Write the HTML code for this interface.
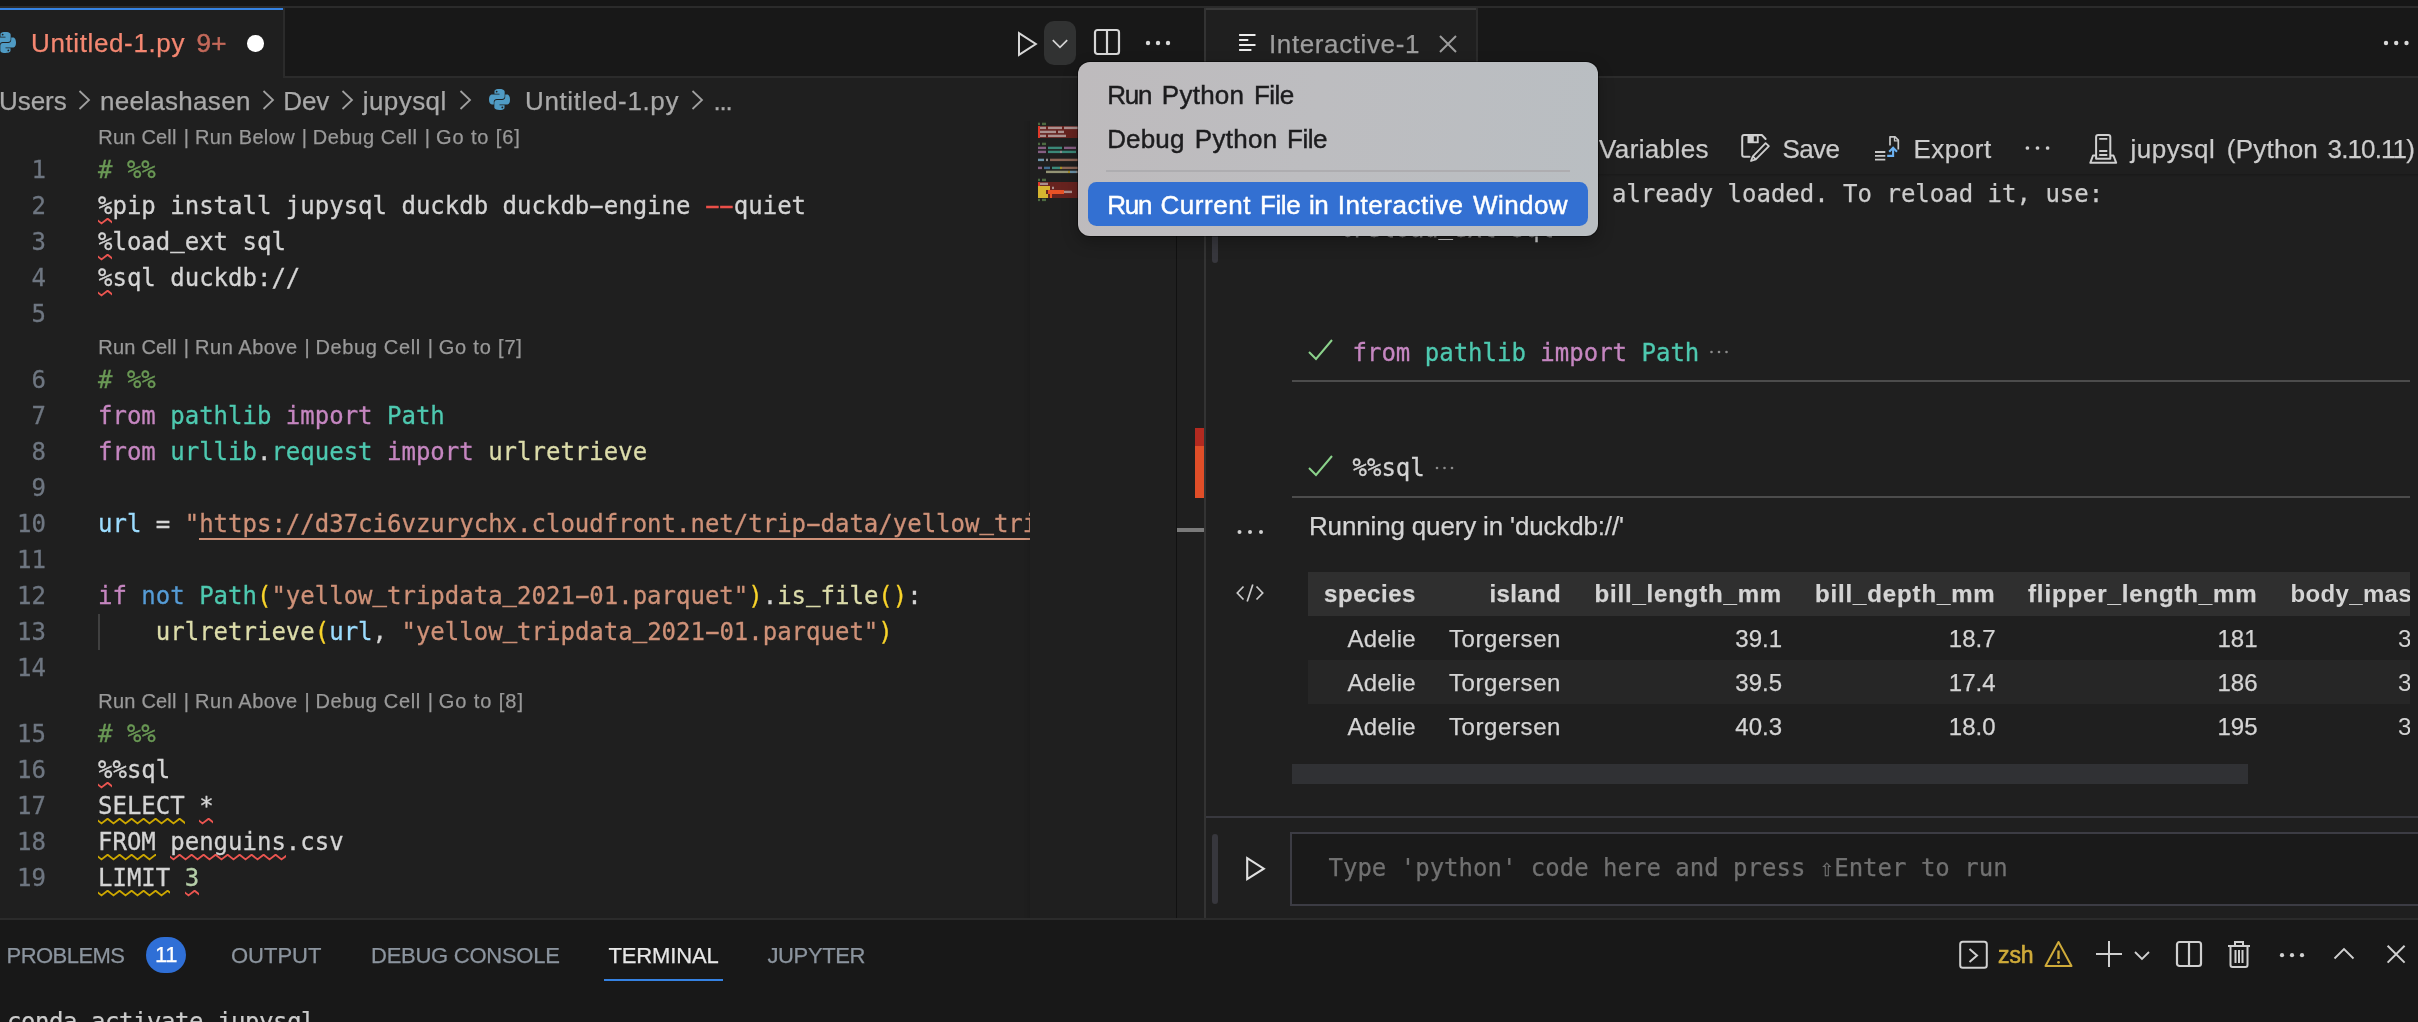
<!DOCTYPE html>
<html lang="en"><head><meta charset="utf-8"><title>Untitled-1.py</title>
<style>
html,body{margin:0;padding:0;background:#1f1f1f;}
body{width:2418px;height:1022px;overflow:hidden;position:relative;}
#root{position:absolute;left:0;top:0;width:2418px;height:1022px;overflow:hidden;will-change:transform;}
.hy{display:inline-block;transform:scaleX(1.950);}
.us{display:inline-block;transform:translateY(-3.500px);}
#root div,#root svg{position:absolute;}
#root span{position:static;}
.g{left:0;top:0;width:0;height:0;}
.t{white-space:pre;-webkit-text-stroke:0.250px;}
.ln{left:0;width:46px;text-align:right;font:400 24px/36px 'DejaVu Sans Mono', 'Liberation Mono', monospace;color:#6e7681;white-space:pre;-webkit-text-stroke:0.300px;}
.cl{left:98px;font:400 24px/36px 'DejaVu Sans Mono', 'Liberation Mono', monospace;white-space:pre;color:#d4d4d4;-webkit-text-stroke:0.300px;}
</style></head>
<body><div id="root">
<div style="left:0px;top:0px;width:2418px;height:6px;background:#161616;"></div>
<div style="left:0px;top:6px;width:2418px;height:2px;background:#2b2b2b;"></div>
<div style="left:0px;top:8px;width:1204px;height:68px;background:#181818;"></div>
<div style="left:1206px;top:8px;width:1212px;height:68px;background:#181818;"></div>
<div style="left:0px;top:76px;width:2418px;height:2px;background:#2b2b2b;"></div>
<div style="left:0px;top:8px;width:283px;height:70px;background:#1f1f1f;"></div>
<div style="left:0px;top:8px;width:283px;height:2px;background:#3582e2;"></div>
<div style="left:283px;top:8px;width:2px;height:69px;background:#2b2b2b;"></div>
<div style="left:1206px;top:8px;width:270px;height:70px;background:#1f1f1f;"></div>
<div style="left:1206px;top:8px;width:270px;height:2px;background:#3a3a3a;"></div>
<div style="left:1476px;top:8px;width:2px;height:69px;background:#2b2b2b;"></div>
<div style="left:1204px;top:8px;width:2px;height:910px;background:#333333;"></div>
<svg style="left:-4.8px;top:31.8px;" width="21" height="21" viewBox="2 2 28 28" fill="none"><path fill="#4f9bc4" d="M15.9 2c-7 0-6.600 3-6.600 3v3.200h6.700v1H6.600S2 8.700 2 15.800c0 7.100 4 6.900 4 6.900h2.400v-3.300s-.100-4 4-4h6.700s3.800.100 3.800-3.700V5.800s.600-3.800-7-3.800zM12.200 4.200a1.200 1.200 0 110 2.400 1.200 1.200 0 010-2.400z"/><path fill="#4f9bc4" d="M16.100 30c7 0 6.600-3 6.600-3v-3.200h-6.700v-1h9.400s4.600.500 4.600-6.600c0-7.100-4-6.900-4-6.900h-2.400v3.300s.100 4-4 4h-6.700s-3.800-.100-3.800 3.700v6.100s-.600 3.600 7 3.600zm3.700-2.200a1.200 1.200 0 110-2.400 1.200 1.200 0 010 2.400z"/></svg>
<div style="left:247px;top:35px;width:16.500px;height:16.500px;border-radius:50%;background:#ffffff"></div>
<svg style="left:1014px;top:28px;" width="30" height="32" viewBox="0 0 30 32" fill="none"><path d="M5 5.200 L21.800 16 L5 26.800 Z" stroke="#d7d7d7" stroke-width="2" stroke-linejoin="miter"/></svg>
<div style="left:1044px;top:21px;width:32px;height:44px;border-radius:10px;background:#313232"></div>
<svg style="left:1050px;top:36px;" width="20" height="16" viewBox="0 0 20 16" fill="none"><path d="M2.800 4.200 L10 11.400 L17.200 4.200" stroke="#d4d4d4" stroke-width="1.700"/></svg>
<svg style="left:1092px;top:27px;" width="30" height="30" viewBox="0 0 30 30" fill="none"><rect x="3" y="3" width="24" height="24" rx="2.500" stroke="#d6d6d6" stroke-width="2.200"/><path d="M15 3 V27" stroke="#d6d6d6" stroke-width="2.200"/></svg>
<svg style="left:1142px;top:37px;" width="33" height="12" viewBox="0 0 33 12" fill="none"><circle cx="6.0" cy="6.0" r="2.2" fill="#d8d8d8"/><circle cx="16.0" cy="6.0" r="2.2" fill="#d8d8d8"/><circle cx="26.0" cy="6.0" r="2.2" fill="#d8d8d8"/></svg>
<svg style="left:1238px;top:33px;" width="20" height="20" viewBox="0 0 20 20" fill="none"><path d="M1.100 2 H17.500 M1.100 7 H10.300 M1.100 12 H17.500 M1.100 17 H13.400" stroke="#ececec" stroke-width="2"/></svg>
<svg style="left:1437px;top:33px;" width="22" height="22" viewBox="0 0 22 22" fill="none"><path d="M3 3 L19 19 M19 3 L3 19" stroke="#9d9d9d" stroke-width="2"/></svg>
<svg style="left:2380px;top:37px;" width="33" height="12" viewBox="0 0 33 12" fill="none"><circle cx="6.0" cy="6.0" r="2.2" fill="#d8d8d8"/><circle cx="16.2" cy="6.0" r="2.2" fill="#d8d8d8"/><circle cx="26.5" cy="6.0" r="2.2" fill="#d8d8d8"/></svg>
<svg style="left:76.5px;top:88px;" width="16" height="24" viewBox="0 0 16 24" fill="none"><path d="M2.500 3 L12 12 L2.500 21" stroke="#a0a0a0" stroke-width="1.800"/></svg>
<svg style="left:261px;top:88px;" width="16" height="24" viewBox="0 0 16 24" fill="none"><path d="M2.500 3 L12 12 L2.500 21" stroke="#a0a0a0" stroke-width="1.800"/></svg>
<svg style="left:339.5px;top:88px;" width="16" height="24" viewBox="0 0 16 24" fill="none"><path d="M2.500 3 L12 12 L2.500 21" stroke="#a0a0a0" stroke-width="1.800"/></svg>
<svg style="left:458px;top:88px;" width="16" height="24" viewBox="0 0 16 24" fill="none"><path d="M2.500 3 L12 12 L2.500 21" stroke="#a0a0a0" stroke-width="1.800"/></svg>
<svg style="left:689.5px;top:88px;" width="16" height="24" viewBox="0 0 16 24" fill="none"><path d="M2.500 3 L12 12 L2.500 21" stroke="#a0a0a0" stroke-width="1.800"/></svg>
<svg style="left:489px;top:88.7px;" width="21" height="21" viewBox="2 2 28 28" fill="none"><path fill="#4f9bc4" d="M15.9 2c-7 0-6.600 3-6.600 3v3.200h6.700v1H6.600S2 8.700 2 15.800c0 7.100 4 6.900 4 6.900h2.400v-3.300s-.100-4 4-4h6.700s3.800.100 3.800-3.700V5.800s.600-3.800-7-3.800zM12.200 4.200a1.200 1.200 0 110 2.400 1.200 1.200 0 010-2.400z"/><path fill="#4f9bc4" d="M16.100 30c7 0 6.600-3 6.600-3v-3.200h-6.700v-1h9.400s4.600.500 4.600-6.600c0-7.100-4-6.900-4-6.900h-2.400v3.300s.100 4-4 4h-6.700s-3.800-.100-3.800 3.700v6.100s-.600 3.600 7 3.600zm3.700-2.200a1.200 1.200 0 110-2.400 1.200 1.200 0 010 2.400z"/></svg>
<div style="left:0;top:121px;width:1030px;height:797px;overflow:hidden;background:transparent"><div style="left:0;top:-121px;width:1030px;height:1022px"><div class="ln" style="top:152px">1</div><div class="cl" style="top:152px"><span style="color:#6a9955"># %%</span></div><div class="ln" style="top:188px">2</div><div class="cl" style="top:188px"><span style="color:#d4d4d4">%pip install jupysql duckdb duckdb<span class="hy">-</span>engine </span><span style="color:#ea4f49"><span class="hy">-</span><span class="hy">-</span></span><span style="color:#d4d4d4">quiet</span></div><div class="ln" style="top:224px">3</div><div class="cl" style="top:224px"><span style="color:#d4d4d4">%load<span class="us">_</span>ext sql</span></div><div class="ln" style="top:260px">4</div><div class="cl" style="top:260px"><span style="color:#d4d4d4">%sql duckdb://</span></div><div class="ln" style="top:296px">5</div><div class="ln" style="top:362px">6</div><div class="cl" style="top:362px"><span style="color:#6a9955"># %%</span></div><div class="ln" style="top:398px">7</div><div class="cl" style="top:398px"><span style="color:#c586c0">from</span><span style="color:#4ec9b0"> pathlib</span><span style="color:#c586c0"> import</span><span style="color:#4ec9b0"> Path</span></div><div class="ln" style="top:434px">8</div><div class="cl" style="top:434px"><span style="color:#c586c0">from</span><span style="color:#4ec9b0"> urllib</span><span style="color:#d4d4d4">.</span><span style="color:#4ec9b0">request</span><span style="color:#c586c0"> import</span><span style="color:#dcdcaa"> urlretrieve</span></div><div class="ln" style="top:470px">9</div><div class="ln" style="top:506px">10</div><div class="cl" style="top:506px"><span style="color:#9cdcfe">url</span><span style="color:#d4d4d4"> = </span><span style="color:#ce9178">"</span><span style="color:#ce9178">https://d37ci6vzurychx.cloudfront.net/trip<span class="hy">-</span>data/yellow<span class="us">_</span>tripdata<span class="us">_</span>2021<span class="hy">-</span>01.parquet</span><span style="color:#ce9178">"</span></div><div class="ln" style="top:542px">11</div><div class="ln" style="top:578px">12</div><div class="cl" style="top:578px"><span style="color:#c586c0">if</span><span style="color:#569cd6"> not</span><span style="color:#4ec9b0"> Path</span><span style="color:#f8d32a">(</span><span style="color:#ce9178">"yellow<span class="us">_</span>tripdata<span class="us">_</span>2021<span class="hy">-</span>01.parquet"</span><span style="color:#f8d32a">)</span><span style="color:#d4d4d4">.</span><span style="color:#dcdcaa">is<span class="us">_</span>file</span><span style="color:#f8d32a">()</span><span style="color:#d4d4d4">:</span></div><div class="ln" style="top:614px">13</div><div class="cl" style="top:614px"><span style="color:#dcdcaa">    urlretrieve</span><span style="color:#f8d32a">(</span><span style="color:#9cdcfe">url</span><span style="color:#d4d4d4">, </span><span style="color:#ce9178">"yellow<span class="us">_</span>tripdata<span class="us">_</span>2021<span class="hy">-</span>01.parquet"</span><span style="color:#f8d32a">)</span></div><div class="ln" style="top:650px">14</div><div class="ln" style="top:716px">15</div><div class="cl" style="top:716px"><span style="color:#6a9955"># %%</span></div><div class="ln" style="top:752px">16</div><div class="cl" style="top:752px"><span style="color:#d4d4d4">%%sql</span></div><div class="ln" style="top:788px">17</div><div class="cl" style="top:788px"><span style="color:#d4d4d4">SELECT *</span></div><div class="ln" style="top:824px">18</div><div class="cl" style="top:824px"><span style="color:#d4d4d4">FROM penguins.csv</span></div><div class="ln" style="top:860px">19</div><div class="cl" style="top:860px"><span style="color:#d4d4d4">LIMIT </span><span style="color:#b5cea8">3</span></div><div style="left:98px;top:614px;width:2px;height:36px;background:#404040"></div><div style="left:199.1px;top:538px;width:900px;height:2px;background:#ce9178"></div></div></div>
<svg style="left:98.0px;top:218px;overflow:hidden;" width="14.4" height="7" viewBox="0 0 14.4 7" fill="none"><polyline points="-2.4,0.7 3.5,5.4 9.6,0.7 15.5,5.4 21.6,0.7 27.5,5.4 33.6,0.7" stroke="#ea5550" stroke-width="1.900" fill="none"/></svg>
<svg style="left:98.0px;top:254px;overflow:hidden;" width="14.4" height="7" viewBox="0 0 14.4 7" fill="none"><polyline points="-2.4,0.7 3.5,5.4 9.6,0.7 15.5,5.4 21.6,0.7 27.5,5.4 33.6,0.7" stroke="#ea5550" stroke-width="1.900" fill="none"/></svg>
<svg style="left:98.0px;top:290px;overflow:hidden;" width="14.4" height="7" viewBox="0 0 14.4 7" fill="none"><polyline points="-2.4,0.7 3.5,5.4 9.6,0.7 15.5,5.4 21.6,0.7 27.5,5.4 33.6,0.7" stroke="#ea5550" stroke-width="1.900" fill="none"/></svg>
<svg style="left:98.0px;top:782px;overflow:hidden;" width="14.4" height="7" viewBox="0 0 14.4 7" fill="none"><polyline points="-2.4,0.7 3.5,5.4 9.6,0.7 15.5,5.4 21.6,0.7 27.5,5.4 33.6,0.7" stroke="#ea5550" stroke-width="1.900" fill="none"/></svg>
<svg style="left:98.0px;top:818px;overflow:hidden;" width="86.7" height="7" viewBox="0 0 86.7 7" fill="none"><polyline points="-2.4,0.7 3.5,5.4 9.6,0.7 15.5,5.4 21.6,0.7 27.5,5.4 33.6,0.7 39.5,5.4 45.6,0.7 51.5,5.4 57.6,0.7 63.5,5.4 69.6,0.7 75.5,5.4 81.6,0.7 87.5,5.4 93.6,0.7 99.5,5.4 105.6,0.7" stroke="#cca700" stroke-width="1.900" fill="none"/></svg>
<svg style="left:199.1px;top:818px;overflow:hidden;" width="14.4" height="7" viewBox="0 0 14.4 7" fill="none"><polyline points="-2.4,0.7 3.5,5.4 9.6,0.7 15.5,5.4 21.6,0.7 27.5,5.4 33.6,0.7" stroke="#ea5550" stroke-width="1.900" fill="none"/></svg>
<svg style="left:98.0px;top:854px;overflow:hidden;" width="57.8" height="7" viewBox="0 0 57.8 7" fill="none"><polyline points="-2.4,0.7 3.5,5.4 9.6,0.7 15.5,5.4 21.6,0.7 27.5,5.4 33.6,0.7 39.5,5.4 45.6,0.7 51.5,5.4 57.6,0.7 63.5,5.4 69.6,0.7 75.5,5.4 81.6,0.7" stroke="#cca700" stroke-width="1.900" fill="none"/></svg>
<svg style="left:170.2px;top:854px;overflow:hidden;" width="115.6" height="7" viewBox="0 0 115.6 7" fill="none"><polyline points="-2.4,0.7 3.5,5.4 9.6,0.7 15.5,5.4 21.6,0.7 27.5,5.4 33.6,0.7 39.5,5.4 45.6,0.7 51.5,5.4 57.6,0.7 63.5,5.4 69.6,0.7 75.5,5.4 81.6,0.7 87.5,5.4 93.6,0.7 99.5,5.4 105.6,0.7 111.5,5.4 117.6,0.7 123.5,5.4 129.6,0.7" stroke="#ea5550" stroke-width="1.900" fill="none"/></svg>
<svg style="left:98.0px;top:890px;overflow:hidden;" width="72.2" height="7" viewBox="0 0 72.2 7" fill="none"><polyline points="-2.4,0.7 3.5,5.4 9.6,0.7 15.5,5.4 21.6,0.7 27.5,5.4 33.6,0.7 39.5,5.4 45.6,0.7 51.5,5.4 57.6,0.7 63.5,5.4 69.6,0.7 75.5,5.4 81.6,0.7 87.5,5.4 93.6,0.7" stroke="#cca700" stroke-width="1.900" fill="none"/></svg>
<svg style="left:184.7px;top:890px;overflow:hidden;" width="14.4" height="7" viewBox="0 0 14.4 7" fill="none"><polyline points="-2.4,0.7 3.5,5.4 9.6,0.7 15.5,5.4 21.6,0.7 27.5,5.4 33.6,0.7" stroke="#ea5550" stroke-width="1.900" fill="none"/></svg>
<div style="left:1024px;top:121px;width:6px;height:797px;background:linear-gradient(to right, rgba(0,0,0,0), rgba(0,0,0,0.080));"></div>
<svg style="left:0px;top:0px;" width="2418" height="1022" viewBox="0 0 2418 1022" fill="none"><rect x="1038" y="126" width="138" height="12" fill="#67231f"/><rect x="1038" y="182" width="138" height="16" fill="#67231f"/><rect x="1038" y="122.7" width="2" height="2.400" fill="#6a9955" opacity="0.620"/><rect x="1042" y="122.7" width="4" height="2.400" fill="#6a9955" opacity="0.620"/><rect x="1038" y="126.7" width="8" height="2.400" fill="#d4d4d4" opacity="0.620"/><rect x="1048" y="126.7" width="14" height="2.400" fill="#d4d4d4" opacity="0.620"/><rect x="1064" y="126.7" width="14" height="2.400" fill="#d4d4d4" opacity="0.620"/><rect x="1080" y="126.7" width="12" height="2.400" fill="#d4d4d4" opacity="0.620"/><rect x="1094" y="126.7" width="26" height="2.400" fill="#d4d4d4" opacity="0.620"/><rect x="1122" y="126.7" width="4" height="2.400" fill="#ea4f49" opacity="0.620"/><rect x="1126" y="126.7" width="10" height="2.400" fill="#d4d4d4" opacity="0.620"/><rect x="1038" y="130.7" width="18" height="2.400" fill="#d4d4d4" opacity="0.620"/><rect x="1058" y="130.7" width="6" height="2.400" fill="#d4d4d4" opacity="0.620"/><rect x="1038" y="134.7" width="8" height="2.400" fill="#d4d4d4" opacity="0.620"/><rect x="1048" y="134.7" width="18" height="2.400" fill="#d4d4d4" opacity="0.620"/><rect x="1038" y="142.7" width="2" height="2.400" fill="#6a9955" opacity="0.620"/><rect x="1042" y="142.7" width="4" height="2.400" fill="#6a9955" opacity="0.620"/><rect x="1038" y="146.7" width="8" height="2.400" fill="#c586c0" opacity="0.620"/><rect x="1048" y="146.7" width="14" height="2.400" fill="#4ec9b0" opacity="0.620"/><rect x="1064" y="146.7" width="12" height="2.400" fill="#c586c0" opacity="0.620"/><rect x="1078" y="146.7" width="8" height="2.400" fill="#4ec9b0" opacity="0.620"/><rect x="1038" y="150.7" width="8" height="2.400" fill="#c586c0" opacity="0.620"/><rect x="1048" y="150.7" width="12" height="2.400" fill="#4ec9b0" opacity="0.620"/><rect x="1060" y="150.7" width="2" height="2.400" fill="#d4d4d4" opacity="0.620"/><rect x="1062" y="150.7" width="14" height="2.400" fill="#4ec9b0" opacity="0.620"/><rect x="1078" y="150.7" width="12" height="2.400" fill="#c586c0" opacity="0.620"/><rect x="1092" y="150.7" width="22" height="2.400" fill="#dcdcaa" opacity="0.620"/><rect x="1038" y="158.7" width="6" height="2.400" fill="#9cdcfe" opacity="0.620"/><rect x="1046" y="158.7" width="2" height="2.400" fill="#d4d4d4" opacity="0.620"/><rect x="1050" y="158.7" width="2" height="2.400" fill="#ce9178" opacity="0.620"/><rect x="1052" y="158.7" width="124" height="2.400" fill="#ce9178" opacity="0.620"/><rect x="1038" y="166.7" width="4" height="2.400" fill="#c586c0" opacity="0.620"/><rect x="1044" y="166.7" width="6" height="2.400" fill="#569cd6" opacity="0.620"/><rect x="1052" y="166.7" width="8" height="2.400" fill="#4ec9b0" opacity="0.620"/><rect x="1060" y="166.7" width="2" height="2.400" fill="#f8d32a" opacity="0.620"/><rect x="1062" y="166.7" width="66" height="2.400" fill="#ce9178" opacity="0.620"/><rect x="1128" y="166.7" width="2" height="2.400" fill="#f8d32a" opacity="0.620"/><rect x="1130" y="166.7" width="2" height="2.400" fill="#d4d4d4" opacity="0.620"/><rect x="1132" y="166.7" width="14" height="2.400" fill="#dcdcaa" opacity="0.620"/><rect x="1146" y="166.7" width="4" height="2.400" fill="#f8d32a" opacity="0.620"/><rect x="1150" y="166.7" width="2" height="2.400" fill="#d4d4d4" opacity="0.620"/><rect x="1046" y="170.7" width="22" height="2.400" fill="#dcdcaa" opacity="0.620"/><rect x="1068" y="170.7" width="2" height="2.400" fill="#f8d32a" opacity="0.620"/><rect x="1070" y="170.7" width="6" height="2.400" fill="#9cdcfe" opacity="0.620"/><rect x="1076" y="170.7" width="2" height="2.400" fill="#d4d4d4" opacity="0.620"/><rect x="1080" y="170.7" width="66" height="2.400" fill="#ce9178" opacity="0.620"/><rect x="1146" y="170.7" width="2" height="2.400" fill="#f8d32a" opacity="0.620"/><rect x="1038" y="178.7" width="2" height="2.400" fill="#6a9955" opacity="0.620"/><rect x="1042" y="178.7" width="4" height="2.400" fill="#6a9955" opacity="0.620"/><rect x="1038" y="182.7" width="10" height="2.400" fill="#d4d4d4" opacity="0.620"/><rect x="1038" y="186.7" width="12" height="2.400" fill="#d4d4d4" opacity="0.620"/><rect x="1052" y="186.7" width="2" height="2.400" fill="#d4d4d4" opacity="0.620"/><rect x="1038" y="190.7" width="8" height="2.400" fill="#d4d4d4" opacity="0.620"/><rect x="1048" y="190.7" width="24" height="2.400" fill="#d4d4d4" opacity="0.620"/><rect x="1038" y="194.7" width="10" height="2.400" fill="#d4d4d4" opacity="0.620"/><rect x="1050" y="194.7" width="2" height="2.400" fill="#b5cea8" opacity="0.620"/><rect x="1038" y="198.7" width="2" height="2.400" fill="#6a9955" opacity="0.620"/><rect x="1042" y="198.7" width="4" height="2.400" fill="#6a9955" opacity="0.620"/><rect x="1038" y="126" width="2" height="4" fill="#e0392a"/><rect x="1038" y="130" width="2" height="4" fill="#e0392a"/><rect x="1038" y="134" width="2" height="4" fill="#e0392a"/><rect x="1038" y="182" width="2" height="4" fill="#e0392a"/><rect x="1038" y="186" width="12" height="4" fill="#d6b530"/><rect x="1052" y="186" width="0" height="4" fill="#e85226"/><rect x="1038" y="190" width="8" height="4" fill="#d6b530"/><rect x="1048" y="190" width="16" height="4" fill="#e85226"/><rect x="1038" y="194" width="10" height="4" fill="#d6b530"/><rect x="1050" y="194" width="2" height="4" fill="#e85226"/></svg>
<div style="left:1176px;top:121px;width:1px;height:797px;background:#111111;"></div>
<div style="left:1195px;top:428px;width:9px;height:18px;background:#b32a20;"></div>
<div style="left:1195px;top:446px;width:9px;height:52px;background:#e04e28;"></div>
<div style="left:1177px;top:528px;width:27px;height:4px;background:#7a7a7a;"></div>
<div style="left:1212px;top:170px;width:6px;height:93px;border-radius:3px;background:#37373d"></div>
<div style="left:1206px;top:174px;width:1212px;height:3px;background:linear-gradient(to bottom, rgba(0,0,0,0.16), rgba(0,0,0,0));"></div>
<svg style="left:1739px;top:132px;" width="33" height="31" viewBox="0 0 33 31" fill="none"><path d="M10.500 24.800 H5.200 Q3.200 24.800 3.200 22.800 V5 Q3.200 3 5.200 3 H22.800 L26.600 7" stroke="#cfcfcf" stroke-width="2" stroke-linejoin="round" stroke-linecap="round"/><rect x="8.500" y="3.600" width="11.200" height="7.600" fill="#cfcfcf"/><rect x="14.800" y="4.400" width="3" height="5" fill="#1f1f1f"/><path d="M26.600 11.100 L29.900 14.100 L16.800 27.300 L12 29 L13.800 24.300 Z M13.800 24.300 L16.800 27.300" stroke="#cfcfcf" stroke-width="1.800" stroke-linejoin="round"/></svg>
<svg style="left:1873px;top:134px;" width="28" height="28" viewBox="0 0 28 28" fill="none"><path d="M2 18 H12.300 M2 21.800 H12.300 M2 25.600 H12.300" stroke="#c8c8c8" stroke-width="1.800"/><path d="M17 11.500 V2.800 H22 L25.300 6.100 V15.500" stroke="#c8c8c8" stroke-width="1.700" stroke-linejoin="round"/><path d="M21.500 3 V6.800 H25.300" stroke="#c8c8c8" stroke-width="1.300"/><path d="M14.200 21.900 H20.100 V14.500" stroke="#6cb2f2" stroke-width="2.100"/><path d="M16.200 17.700 L20.100 13.800 L24 17.700" stroke="#6cb2f2" stroke-width="2.100"/></svg>
<svg style="left:2020px;top:142px;" width="34" height="12" viewBox="0 0 34 12" fill="none"><circle cx="7.400" cy="6" r="1.850" fill="#cccccc"/><circle cx="17.500" cy="6" r="1.850" fill="#cccccc"/><circle cx="27.600" cy="6" r="1.850" fill="#cccccc"/></svg>
<svg style="left:2087px;top:132px;" width="34" height="34" viewBox="0 0 34 34" fill="none"><path d="M9.100 26.700 V5 Q9.100 3 11.100 3 H21.300 Q23.300 3 23.300 5 V26.700 Z" stroke="#cfcfcf" stroke-width="2" stroke-linejoin="round"/><path d="M12.200 6.900 H20.300 M12.200 19 H20.300 M12.200 23 H20.300" stroke="#cfcfcf" stroke-width="1.800"/><path d="M9.100 23.500 H6 L3.300 30.800 H29.200 L26.400 23.500 H23.300" stroke="#cfcfcf" stroke-width="2" stroke-linejoin="round"/></svg>
<svg style="left:1307px;top:338px;" width="28" height="24" viewBox="0 0 28 24" fill="none"><path d="M2 14 L9 21 L25 2" stroke="#8bd28b" stroke-width="2" fill="none"/></svg>
<svg style="left:1307px;top:454px;" width="28" height="24" viewBox="0 0 28 24" fill="none"><path d="M2 14 L9 21 L25 2" stroke="#8bd28b" stroke-width="2" fill="none"/></svg>
<div class="cl" style="left:1352.500px;top:334.5px"><span style="color:#c586c0">from</span><span style="color:#4ec9b0"> pathlib</span><span style="color:#c586c0"> import</span><span style="color:#4ec9b0"> Path</span></div>
<div class="cl" style="left:1352.500px;top:450.3px"><span style="color:#d4d4d4">%%sql</span></div>
<svg style="left:1705px;top:346px;" width="28" height="12" viewBox="0 0 28 12" fill="none"><circle cx="6.5" cy="6.0" r="1.3" fill="#8a8a8a"/><circle cx="14.0" cy="6.0" r="1.3" fill="#8a8a8a"/><circle cx="21.5" cy="6.0" r="1.3" fill="#8a8a8a"/></svg>
<svg style="left:1431px;top:462px;" width="28" height="12" viewBox="0 0 28 12" fill="none"><circle cx="6.0" cy="6.0" r="1.3" fill="#8a8a8a"/><circle cx="13.5" cy="6.0" r="1.3" fill="#8a8a8a"/><circle cx="21.0" cy="6.0" r="1.3" fill="#8a8a8a"/></svg>
<div style="left:1292px;top:380px;width:1118px;height:2px;background:#4c4c4c;"></div>
<div style="left:1292px;top:496px;width:1118px;height:2px;background:#4c4c4c;"></div>
<svg style="left:1233px;top:526px;" width="35" height="12" viewBox="0 0 35 12" fill="none"><circle cx="6.5" cy="6.0" r="2" fill="#d0d0d0"/><circle cx="17.0" cy="6.0" r="2" fill="#d0d0d0"/><circle cx="28.0" cy="6.0" r="2" fill="#d0d0d0"/></svg>
<svg style="left:1234px;top:582px;" width="32" height="22" viewBox="0 0 32 22" fill="none"><path d="M9.500 4.500 L3.300 11 L9.500 17.500 M22.500 4.500 L28.700 11 L22.500 17.500 M18.800 2.500 L13.200 19.500" stroke="#cccccc" stroke-width="1.700" fill="none"/></svg>
<div style="left:1308px;top:572px;width:1102px;height:44px;background:#2f2f2f;"></div>
<div style="left:1308px;top:660px;width:1102px;height:44px;background:#262626;"></div>
<div style="left:2280px;top:572px;width:130px;height:176px;overflow:hidden"><div style="left:10.500px;top:5.0px;font:700 24px/34px 'Liberation Sans', sans-serif;color:#d4d4d4;white-space:pre;letter-spacing:0.350px">body_mass_g</div><div style="left:118px;top:50.0px;font:400 24px/34px 'Liberation Sans', sans-serif;color:#d4d4d4;white-space:pre">3750</div><div style="left:118px;top:94.0px;font:400 24px/34px 'Liberation Sans', sans-serif;color:#d4d4d4;white-space:pre">3750</div><div style="left:118px;top:138.0px;font:400 24px/34px 'Liberation Sans', sans-serif;color:#d4d4d4;white-space:pre">3750</div></div>
<div style="left:1292px;top:764px;width:956px;height:20px;background:#303134;"></div>
<div style="left:1206px;top:816px;width:1212px;height:2px;background:#38383e;"></div>
<div style="left:1212px;top:834px;width:6px;height:70px;border-radius:3px;background:#37373d"></div>
<svg style="left:1240px;top:852px;" width="32" height="34" viewBox="0 0 32 34" fill="none"><path d="M7.200 6.200 L23.800 16.700 L7.200 27.200 Z" stroke="#e0e0e0" stroke-width="2.100"/></svg>
<div style="left:1290px;top:832px;width:1140px;height:70px;border:2px solid #3c3c44;background:#1a1a1a"></div>
<div style="left:0px;top:918px;width:2418px;height:104px;background:#181818;"></div>
<div style="left:0px;top:918px;width:2418px;height:2px;background:#2b2b2b;"></div>
<div style="left:146px;top:937px;width:40px;height:36px;border-radius:18px;background:#2f6fd6"></div>
<div style="left:604px;top:979px;width:119px;height:2px;background:#3582e2;"></div>
<svg style="left:1958px;top:939px;" width="31" height="31" viewBox="0 0 31 31" fill="none"><rect x="2.200" y="2.800" width="26.600" height="26" rx="2.500" stroke="#d0d0d0" stroke-width="2"/><path d="M11.500 10 L19 16.500 L11.500 23" stroke="#d0d0d0" stroke-width="2"/></svg>
<svg style="left:2043px;top:939px;" width="31" height="30" viewBox="0 0 31 30" fill="none"><path d="M15.500 3 L28.500 27 H2.500 Z" stroke="#cfab3a" stroke-width="2" stroke-linejoin="round"/><path d="M15.500 11.500 V20" stroke="#cfab3a" stroke-width="2.400"/><circle cx="15.500" cy="23.300" r="1.400" fill="#cfab3a"/></svg>
<svg style="left:2095px;top:940px;" width="28" height="28" viewBox="0 0 28 28" fill="none"><path d="M14 1 V27 M1 14 H27" stroke="#d0d0d0" stroke-width="2"/></svg>
<svg style="left:2133px;top:949px;" width="18" height="13" viewBox="0 0 18 13" fill="none"><path d="M2 3 L9 10 L16 3" stroke="#d0d0d0" stroke-width="1.800"/></svg>
<svg style="left:2174px;top:939px;" width="30" height="30" viewBox="0 0 30 30" fill="none"><rect x="3" y="3" width="24" height="24" rx="2.500" stroke="#d0d0d0" stroke-width="2.200"/><path d="M15 3 V27" stroke="#d0d0d0" stroke-width="2.200"/></svg>
<svg style="left:2226px;top:939px;" width="26" height="30" viewBox="0 0 26 30" fill="none"><path d="M2 7 H24 M9 7 V3 H17 V7 M4.500 7 V26 Q4.500 28 6.500 28 H19.500 Q21.500 28 21.500 26 V7 M9.500 11 V24 M13 11 V24 M16.500 11 V24" stroke="#d0d0d0" stroke-width="2"/></svg>
<svg style="left:2276px;top:949px;" width="33" height="12" viewBox="0 0 33 12" fill="none"><circle cx="6.0" cy="6.2" r="2.1" fill="#d0d0d0"/><circle cx="16.0" cy="6.2" r="2.1" fill="#d0d0d0"/><circle cx="26.0" cy="6.2" r="2.1" fill="#d0d0d0"/></svg>
<div class="t" style="left:31.0px;top:25.4px;font:400 26px/36px 'Liberation Sans', sans-serif;color:#f48771;letter-spacing:0.62px;">Untitled-1.py</div>
<div class="t" style="left:196.5px;top:25.4px;font:400 26px/36px 'Liberation Sans', sans-serif;color:#c4695a;letter-spacing:0.17px;-webkit-text-stroke:0.500px;">9+</div>
<div class="t" style="left:1269.0px;top:26.2px;font:400 26px/36px 'Liberation Sans', sans-serif;color:#9d9d9d;letter-spacing:0.61px;">Interactive-1</div>
<div class="t" style="left:-1.0px;top:82.6px;font:400 26px/36px 'Liberation Sans', sans-serif;color:#a9a9a9;letter-spacing:-0.04px;">Users</div>
<div class="t" style="left:100.0px;top:82.6px;font:400 26px/36px 'Liberation Sans', sans-serif;color:#a9a9a9;letter-spacing:0.29px;">neelashasen</div>
<div class="t" style="left:283.3px;top:82.6px;font:400 26px/36px 'Liberation Sans', sans-serif;color:#a9a9a9;letter-spacing:-0.08px;">Dev</div>
<div class="t" style="left:362.7px;top:82.6px;font:400 26px/36px 'Liberation Sans', sans-serif;color:#a9a9a9;letter-spacing:0.44px;">jupysql</div>
<div class="t" style="left:525.0px;top:82.6px;font:400 26px/36px 'Liberation Sans', sans-serif;color:#a9a9a9;letter-spacing:0.62px;">Untitled-1.py</div>
<div class="t" style="left:713.5px;top:82.6px;font:400 26px/36px 'Liberation Sans', sans-serif;color:#a9a9a9;letter-spacing:-1.22px;">...</div>
<div class="g"><div class="t" style="left:98.3px;top:122.5px;font:400 20px/28px 'Liberation Sans', sans-serif;color:#999999;letter-spacing:0.21px;">Run Cell</div> <div class="t" style="left:183.7px;top:122.5px;font:400 20px/28px 'Liberation Sans', sans-serif;color:#999999;letter-spacing:-0.60px;">|</div> <div class="t" style="left:195.0px;top:122.5px;font:400 20px/28px 'Liberation Sans', sans-serif;color:#999999;letter-spacing:0.36px;">Run Below</div> <div class="t" style="left:301.7px;top:122.5px;font:400 20px/28px 'Liberation Sans', sans-serif;color:#999999;letter-spacing:-0.60px;">|</div> <div class="t" style="left:312.7px;top:122.5px;font:400 20px/28px 'Liberation Sans', sans-serif;color:#999999;letter-spacing:0.60px;">Debug Cell</div> <div class="t" style="left:424.7px;top:122.5px;font:400 20px/28px 'Liberation Sans', sans-serif;color:#999999;letter-spacing:-0.60px;">|</div> <div class="t" style="left:436.0px;top:122.5px;font:400 20px/28px 'Liberation Sans', sans-serif;color:#999999;letter-spacing:0.89px;">Go to [6]</div></div>
<div class="g"><div class="t" style="left:98.3px;top:332.5px;font:400 20px/28px 'Liberation Sans', sans-serif;color:#999999;letter-spacing:0.21px;">Run Cell</div> <div class="t" style="left:183.7px;top:332.5px;font:400 20px/28px 'Liberation Sans', sans-serif;color:#999999;letter-spacing:-0.60px;">|</div> <div class="t" style="left:195.0px;top:332.5px;font:400 20px/28px 'Liberation Sans', sans-serif;color:#999999;letter-spacing:0.54px;">Run Above</div> <div class="t" style="left:304.4px;top:332.5px;font:400 20px/28px 'Liberation Sans', sans-serif;color:#999999;letter-spacing:-0.60px;">|</div> <div class="t" style="left:315.5px;top:332.5px;font:400 20px/28px 'Liberation Sans', sans-serif;color:#999999;letter-spacing:0.64px;">Debug Cell</div> <div class="t" style="left:427.7px;top:332.5px;font:400 20px/28px 'Liberation Sans', sans-serif;color:#999999;letter-spacing:-0.60px;">|</div> <div class="t" style="left:438.7px;top:332.5px;font:400 20px/28px 'Liberation Sans', sans-serif;color:#999999;letter-spacing:0.81px;">Go to [7]</div></div>
<div class="g"><div class="t" style="left:98.3px;top:686.5px;font:400 20px/28px 'Liberation Sans', sans-serif;color:#999999;letter-spacing:0.21px;">Run Cell</div> <div class="t" style="left:183.7px;top:686.5px;font:400 20px/28px 'Liberation Sans', sans-serif;color:#999999;letter-spacing:-0.60px;">|</div> <div class="t" style="left:195.0px;top:686.5px;font:400 20px/28px 'Liberation Sans', sans-serif;color:#999999;letter-spacing:0.54px;">Run Above</div> <div class="t" style="left:304.4px;top:686.5px;font:400 20px/28px 'Liberation Sans', sans-serif;color:#999999;letter-spacing:-0.60px;">|</div> <div class="t" style="left:315.5px;top:686.5px;font:400 20px/28px 'Liberation Sans', sans-serif;color:#999999;letter-spacing:0.64px;">Debug Cell</div> <div class="t" style="left:427.7px;top:686.5px;font:400 20px/28px 'Liberation Sans', sans-serif;color:#999999;letter-spacing:-0.60px;">|</div> <div class="t" style="left:438.7px;top:686.5px;font:400 20px/28px 'Liberation Sans', sans-serif;color:#999999;letter-spacing:0.95px;">Go to [8]</div></div>
<div class="t" style="left:1599.0px;top:130.8px;font:400 26px/36px 'Liberation Sans', sans-serif;color:#cccccc;letter-spacing:0.39px;">Variables</div>
<div class="t" style="left:1782.5px;top:130.8px;font:400 26px/36px 'Liberation Sans', sans-serif;color:#cccccc;letter-spacing:-0.64px;">Save</div>
<div class="t" style="left:1913.5px;top:130.8px;font:400 26px/36px 'Liberation Sans', sans-serif;color:#cccccc;letter-spacing:0.51px;">Export</div>
<div class="g"><div class="t" style="left:2130.5px;top:130.8px;font:400 26px/36px 'Liberation Sans', sans-serif;color:#cccccc;letter-spacing:0.54px;">jupysql</div> <div class="t" style="left:2226.8px;top:130.8px;font:400 26px/36px 'Liberation Sans', sans-serif;color:#cccccc;letter-spacing:0.23px;">(Python</div> <div class="t" style="left:2327.6px;top:130.8px;font:400 26px/36px 'Liberation Sans', sans-serif;color:#cccccc;letter-spacing:-0.89px;">3.10.11)</div></div>
<div class="t" style="left:1308.5px;top:176.9px;font:400 24px/34px 'DejaVu Sans Mono', 'Liberation Mono', monospace;color:#cccccc;">The sql extension is already loaded. To reload it, use:</div>
<div class="t" style="left:1308.5px;top:212.3px;font:400 24px/34px 'DejaVu Sans Mono', 'Liberation Mono', monospace;color:#cccccc;">  %reload<span class="us">_</span>ext sql</div>
<div class="t" style="left:1309.0px;top:508.4px;font:400 26px/36px 'Liberation Sans', sans-serif;color:#d4d4d4;letter-spacing:-0.16px;">Running query in 'duckdb://'</div>
<div class="t" style="left:1324.0px;top:577.0px;font:700 24px/34px 'Liberation Sans', sans-serif;color:#d4d4d4;letter-spacing:0.56px;">species</div>
<div class="t" style="left:1489.5px;top:577.0px;font:700 24px/34px 'Liberation Sans', sans-serif;color:#d4d4d4;letter-spacing:0.36px;">island</div>
<div class="t" style="left:1594.5px;top:577.0px;font:700 24px/34px 'Liberation Sans', sans-serif;color:#d4d4d4;letter-spacing:0.82px;">bill_length_mm</div>
<div class="t" style="left:1815.0px;top:577.0px;font:700 24px/34px 'Liberation Sans', sans-serif;color:#d4d4d4;letter-spacing:0.86px;">bill_depth_mm</div>
<div class="t" style="left:2028.0px;top:577.0px;font:700 24px/34px 'Liberation Sans', sans-serif;color:#d4d4d4;letter-spacing:0.87px;">flipper_length_mm</div>
<div class="t" style="left:1347.5px;top:622.0px;font:400 24px/34px 'Liberation Sans', sans-serif;color:#d4d4d4;letter-spacing:0.30px;">Adelie</div>
<div class="t" style="left:1449.0px;top:622.0px;font:400 24px/34px 'Liberation Sans', sans-serif;color:#d4d4d4;letter-spacing:0.59px;">Torgersen</div>
<div class="t" style="left:1735.3px;top:622.0px;font:400 24px/34px 'Liberation Sans', sans-serif;color:#d4d4d4;">39.1</div>
<div class="t" style="left:1948.8px;top:622.0px;font:400 24px/34px 'Liberation Sans', sans-serif;color:#d4d4d4;">18.7</div>
<div class="t" style="left:2217.5px;top:622.0px;font:400 24px/34px 'Liberation Sans', sans-serif;color:#d4d4d4;">181</div>
<div class="t" style="left:1347.5px;top:666.0px;font:400 24px/34px 'Liberation Sans', sans-serif;color:#d4d4d4;letter-spacing:0.30px;">Adelie</div>
<div class="t" style="left:1449.0px;top:666.0px;font:400 24px/34px 'Liberation Sans', sans-serif;color:#d4d4d4;letter-spacing:0.59px;">Torgersen</div>
<div class="t" style="left:1735.3px;top:666.0px;font:400 24px/34px 'Liberation Sans', sans-serif;color:#d4d4d4;">39.5</div>
<div class="t" style="left:1948.8px;top:666.0px;font:400 24px/34px 'Liberation Sans', sans-serif;color:#d4d4d4;">17.4</div>
<div class="t" style="left:2217.5px;top:666.0px;font:400 24px/34px 'Liberation Sans', sans-serif;color:#d4d4d4;">186</div>
<div class="t" style="left:1347.5px;top:710.0px;font:400 24px/34px 'Liberation Sans', sans-serif;color:#d4d4d4;letter-spacing:0.30px;">Adelie</div>
<div class="t" style="left:1449.0px;top:710.0px;font:400 24px/34px 'Liberation Sans', sans-serif;color:#d4d4d4;letter-spacing:0.59px;">Torgersen</div>
<div class="t" style="left:1735.3px;top:710.0px;font:400 24px/34px 'Liberation Sans', sans-serif;color:#d4d4d4;">40.3</div>
<div class="t" style="left:1948.8px;top:710.0px;font:400 24px/34px 'Liberation Sans', sans-serif;color:#d4d4d4;">18.0</div>
<div class="t" style="left:2217.5px;top:710.0px;font:400 24px/34px 'Liberation Sans', sans-serif;color:#d4d4d4;">195</div>
<div class="t" style="left:1328.5px;top:851.2px;font:400 24px/34px 'DejaVu Sans Mono', 'Liberation Mono', monospace;color:#717171;">Type 'python' code here and press ⇧Enter to run</div>
<div class="t" style="left:6.5px;top:939.5px;font:400 22px/31px 'Liberation Sans', sans-serif;color:#8b949e;letter-spacing:-0.53px;">PROBLEMS</div>
<div class="t" style="left:155.0px;top:938.9px;font:400 22px/31px 'Liberation Sans', sans-serif;color:#ffffff;letter-spacing:-0.42px;">11</div>
<div class="t" style="left:231.0px;top:939.5px;font:400 22px/31px 'Liberation Sans', sans-serif;color:#8b949e;">OUTPUT</div>
<div class="t" style="left:371.0px;top:939.5px;font:400 22px/31px 'Liberation Sans', sans-serif;color:#8b949e;letter-spacing:-0.26px;">DEBUG CONSOLE</div>
<div class="t" style="left:608.6px;top:939.5px;font:400 22px/31px 'Liberation Sans', sans-serif;color:#e7e7e7;letter-spacing:-0.17px;">TERMINAL</div>
<div class="t" style="left:767.5px;top:939.5px;font:400 22px/31px 'Liberation Sans', sans-serif;color:#8b949e;letter-spacing:-0.39px;">JUPYTER</div>
<div class="t" style="left:7.0px;top:1004.7px;font:400 24px/34px 'DejaVu Sans Mono', 'Liberation Mono', monospace;color:#cccccc;letter-spacing:-0.450px;">conda activate jupysql</div>
<div class="t" style="left:1998.0px;top:939.0px;font:400 23px/32px 'Liberation Sans', sans-serif;color:#cfab3a;letter-spacing:-0.10px;-webkit-text-stroke:0.600px;">zsh</div>
<svg style="left:2332px;top:946px;" width="24" height="16" viewBox="0 0 24 16" fill="none"><path d="M2.500 12.500 L12 3 L21.500 12.500" stroke="#d0d0d0" stroke-width="1.800"/></svg>
<svg style="left:2385px;top:943px;" width="22" height="22" viewBox="0 0 22 22" fill="none"><path d="M2.600 2.800 L19.600 19.600 M19.600 2.800 L2.600 19.600" stroke="#d0d0d0" stroke-width="2"/></svg>
<div style="left:1078px;top:62px;width:520px;height:174px;border-radius:12px;background:linear-gradient(100deg,#bebbbd 0%,#bdbdc0 45%,#b9bec2 100%);box-shadow:0 0 0 1px rgba(0,0,0,0.4),0 6px 16px rgba(0,0,0,0.28)"></div>
<div style="left:1106px;top:170px;width:464px;height:2px;background:#aeadb0;"></div>
<div style="left:1088px;top:182px;width:500px;height:44px;border-radius:8.500px;background:#3370d2"></div>
<div class="g"><div class="t" style="left:1107.2px;top:76.9px;font:400 26px/36px 'Liberation Sans', sans-serif;color:#1c1c1e;letter-spacing:-1.20px;-webkit-text-stroke:0.450px;">Run</div> <div class="t" style="left:1161.8px;top:76.9px;font:400 26px/36px 'Liberation Sans', sans-serif;color:#1c1c1e;letter-spacing:0.26px;-webkit-text-stroke:0.450px;">Python</div> <div class="t" style="left:1254.0px;top:76.9px;font:400 26px/36px 'Liberation Sans', sans-serif;color:#1c1c1e;letter-spacing:-0.53px;-webkit-text-stroke:0.450px;">File</div></div>
<div class="g"><div class="t" style="left:1107.2px;top:120.6px;font:400 26px/36px 'Liberation Sans', sans-serif;color:#1c1c1e;letter-spacing:0.15px;-webkit-text-stroke:0.450px;">Debug</div> <div class="t" style="left:1194.8px;top:120.6px;font:400 26px/36px 'Liberation Sans', sans-serif;color:#1c1c1e;letter-spacing:0.31px;-webkit-text-stroke:0.450px;">Python</div> <div class="t" style="left:1287.1px;top:120.6px;font:400 26px/36px 'Liberation Sans', sans-serif;color:#1c1c1e;letter-spacing:-0.53px;-webkit-text-stroke:0.450px;">File</div></div>
<div class="g"><div class="t" style="left:1107.2px;top:187.0px;font:400 26px/36px 'Liberation Sans', sans-serif;color:#ffffff;letter-spacing:-1.20px;-webkit-text-stroke:0.450px;">Run</div> <div class="t" style="left:1160.5px;top:187.0px;font:400 26px/36px 'Liberation Sans', sans-serif;color:#ffffff;letter-spacing:0.54px;-webkit-text-stroke:0.450px;">Current</div> <div class="t" style="left:1260.0px;top:187.0px;font:400 26px/36px 'Liberation Sans', sans-serif;color:#ffffff;letter-spacing:-0.40px;-webkit-text-stroke:0.450px;">File</div> <div class="t" style="left:1308.9px;top:187.0px;font:400 26px/36px 'Liberation Sans', sans-serif;color:#ffffff;letter-spacing:-0.43px;-webkit-text-stroke:0.450px;">in</div> <div class="t" style="left:1337.8px;top:187.0px;font:400 26px/36px 'Liberation Sans', sans-serif;color:#ffffff;letter-spacing:0.52px;-webkit-text-stroke:0.450px;">Interactive</div> <div class="t" style="left:1473.1px;top:187.0px;font:400 26px/36px 'Liberation Sans', sans-serif;color:#ffffff;letter-spacing:0.40px;-webkit-text-stroke:0.450px;">Window</div></div>
</div></body></html>
